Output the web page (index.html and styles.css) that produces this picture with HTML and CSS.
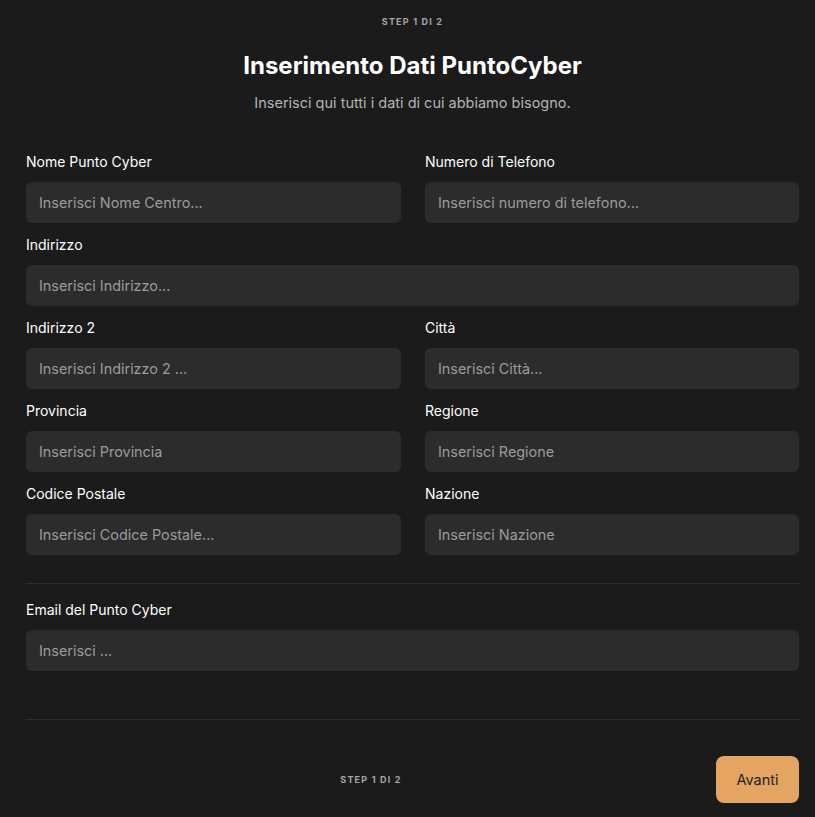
FILE: index.html
```html
<!DOCTYPE html>
<html lang="it">
<head>
<meta charset="utf-8">
<title>Inserimento Dati PuntoCyber</title>
<link rel="stylesheet" href="styles.css">
</head>
<body>
<main class="page">
  <header class="head">
    <div class="step">STEP 1 DI 2</div>
    <h1 class="title">Inserimento Dati PuntoCyber</h1>
    <p class="subtitle">Inserisci qui tutti i dati di cui abbiamo bisogno.</p>
  </header>

  <form class="form">
    <div class="grid">
      <label class="field">
        <span class="label">Nome Punto Cyber</span>
        <input class="input" type="text" placeholder="Inserisci Nome Centro...">
      </label>
      <label class="field">
        <span class="label">Numero di Telefono</span>
        <input class="input" type="text" placeholder="Inserisci numero di telefono...">
      </label>
      <label class="field wide">
        <span class="label">Indirizzo</span>
        <input class="input" type="text" placeholder="Inserisci Indirizzo...">
      </label>
      <label class="field">
        <span class="label">Indirizzo 2</span>
        <input class="input" type="text" placeholder="Inserisci Indirizzo 2 ...">
      </label>
      <label class="field">
        <span class="label">Città</span>
        <input class="input" type="text" placeholder="Inserisci Città...">
      </label>
      <label class="field">
        <span class="label">Provincia</span>
        <input class="input" type="text" placeholder="Inserisci Provincia">
      </label>
      <label class="field">
        <span class="label">Regione</span>
        <input class="input" type="text" placeholder="Inserisci Regione">
      </label>
      <label class="field">
        <span class="label">Codice Postale</span>
        <input class="input" type="text" placeholder="Inserisci Codice Postale...">
      </label>
      <label class="field">
        <span class="label">Nazione</span>
        <input class="input" type="text" placeholder="Inserisci Nazione">
      </label>
    </div>

    <hr class="divider first">

    <label class="field email">
      <span class="label">Email del Punto Cyber</span>
      <input class="input" type="email" placeholder="Inserisci ...">
    </label>

    <hr class="divider second">

    <footer class="foot">
      <span class="spacer"></span>
      <span class="step">STEP 1 DI 2</span>
      <button class="next" type="button">Avanti</button>
    </footer>
  </form>
</main>
</body>
</html>
```

FILE: styles.css
```css
* { box-sizing: border-box; }

html, body {
  margin: 0;
  background: #1b1b1b;
}

body {
  font-family: "Inter", "Liberation Sans", sans-serif;
  color: #ffffff;
}

.page {
  padding: 16px 16px 0 26px;
  width: 815px;
}

.head {
  text-align: center;
}

.step {
  font-size: 9px;
  line-height: 12px;
  font-weight: 700;
  letter-spacing: 1.2px;
  color: #a6a6a6;
}

.title {
  margin: 23px 0 0;
  font-size: 24px;
  line-height: 30px;
  font-weight: 700;
  letter-spacing: 0;
}

.subtitle {
  margin: 12px 0 0;
  font-size: 14.5px;
  line-height: 20px;
  color: #b4b4b4;
}

.form {
  margin-top: 39px;
}

.grid {
  display: grid;
  grid-template-columns: 375px 374px;
  column-gap: 24px;
  row-gap: 12px;
}

.field {
  display: flex;
  flex-direction: column;
  gap: 10px;
}

.wide { grid-column: 1 / -1; }

.label {
  font-size: 14px;
  line-height: 20px;
  font-weight: 400;
  color: #ffffff;
}

.input {
  height: 41px;
  width: 100%;
  border: 0;
  border-radius: 6px;
  background: #2c2c2c;
  padding: 0 13px;
  font: inherit;
  font-size: 14.4px;
  color: #ffffff;
  outline: none;
}

.input::placeholder {
  color: #9b9b9b;
}

.divider {
  border: 0;
  height: 1px;
  background: #2f2f2f;
  margin: 0;
}

.first { margin-top: 28px; }

.email { margin-top: 16px; }

.second { margin-top: 48px; }

.foot {
  margin-top: 36px;
  display: flex;
  align-items: center;
  justify-content: space-between;
}

.spacer { width: 0; }

.next {
  width: 83px;
  height: 47px;
  border: 0;
  border-radius: 8px;
  background: #e4a462;
  color: #222222;
  font-family: inherit;
  font-size: 14.5px;
}
```
